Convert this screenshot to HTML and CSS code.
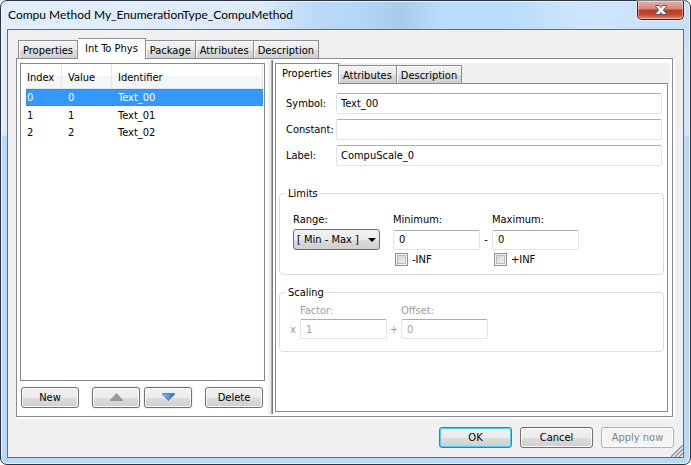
FILE: index.html
```html
<!DOCTYPE html>
<html lang="en">
<head>
<meta charset="utf-8">
<title>Compu Method My_EnumerationType_CompuMethod</title>
<link rel="stylesheet" href="styles.css">
</head>
<body>
<div class="window">
  <header class="titlebar">
    <h1>Compu Method My_EnumerationType_CompuMethod</h1>
    <button class="close" type="button" aria-label="Close">
      <svg width="12" height="10" viewBox="0 0 12 10"><path d="M.8.5h3.500L6 2.500 7.700.5h3.500v1.300L8.300 5l2.900 3.200v1.300H7.700L6 7.500 4.300 9.500H.8V8.200L3.700 5 .8 1.800z" fill="#fff" stroke="#535666" stroke-width="1"/></svg>
    </button>
  </header>
  <main class="client">
    <nav class="tabs" role="tablist">
      <button class="tab" type="button" role="tab">Properties</button>
      <button class="tab active" type="button" role="tab" aria-selected="true">Int To Phys</button>
      <button class="tab" type="button" role="tab">Package</button>
      <button class="tab" type="button" role="tab">Attributes</button>
      <button class="tab" type="button" role="tab">Description</button>
    </nav>
    <section class="panel outer">
      <div class="left">
        <div class="list">
          <table>
            <thead><tr><th class="c-index">Index</th><th class="c-value">Value</th><th>Identifier</th></tr></thead>
            <tbody>
              <tr class="selected"><td>0</td><td>0</td><td>Text_00</td></tr>
              <tr><td>1</td><td>1</td><td>Text_01</td></tr>
              <tr><td>2</td><td>2</td><td>Text_02</td></tr>
            </tbody>
          </table>
        </div>
        <div class="list-actions">
          <button class="btn" type="button">New</button>
          <div class="movers">
            <button class="btn" type="button" aria-label="Move up"><svg width="13" height="8" viewBox="0 0 13 8"><path d="M6.500 0 13 7v1H0V7z" fill="#989898"/></svg></button>
            <button class="btn" type="button" aria-label="Move down"><svg width="13" height="8" viewBox="0 0 13 8"><defs><linearGradient id="blue" x1="0" x2="1"><stop offset="0" stop-color="#8fc0f5"/><stop offset="1" stop-color="#2864c8"/></linearGradient></defs><path d="M.5.5h12v.7L6.500 7.500.5 1.200z" fill="url(#blue)" stroke="#3a70cc" stroke-width=".8"/></svg></button>
          </div>
          <button class="btn" type="button">Delete</button>
        </div>
      </div>
      <div class="splitter"></div>
      <div class="right">
        <nav class="tabs inner" role="tablist">
          <button class="tab active" type="button" role="tab" aria-selected="true">Properties</button>
          <button class="tab" type="button" role="tab">Attributes</button>
          <button class="tab" type="button" role="tab">Description</button>
        </nav>
        <form class="panel details">
          <div class="fields">
            <label for="symbol">Symbol:</label><input id="symbol" type="text" value="Text_00">
            <label for="constant">Constant:</label><input id="constant" type="text">
            <label for="label">Label:</label><input id="label" type="text" value="CompuScale_0">
          </div>
          <fieldset>
            <legend>Limits</legend>
            <div class="limits">
              <label for="range">Range:</label>
              <label for="min">Minimum:</label>
              <span></span>
              <label for="max">Maximum:</label>
              <span class="select"><select id="range"><option>[ Min - Max ]</option></select></span>
              <input id="min" type="text" value="0">
              <span class="op">-</span>
              <input id="max" type="text" value="0">
              <span></span>
              <label class="check"><input type="checkbox">-INF</label>
              <span></span>
              <label class="check"><input type="checkbox">+INF</label>
            </div>
          </fieldset>
          <fieldset class="scaling-set" disabled>
            <legend>Scaling</legend>
            <div class="scaling">
              <span></span><label for="factor">Factor:</label><span></span><label for="offset">Offset:</label>
              <span class="op">x</span><input id="factor" type="text" value="1">
              <span class="op">+</span><input id="offset" type="text" value="0">
            </div>
          </fieldset>
        </form>
      </div>
    </section>
    <footer class="footer">
      <button class="btn default" type="button">OK</button>
      <button class="btn" type="button">Cancel</button>
      <button class="btn" type="button" disabled>Apply now</button>
    </footer>
    <svg class="grip" width="12" height="12" viewBox="0 0 12 12"><path d="M0 12 12 0M4 12l8-8M8 12l4-4" stroke="#8c8c8c" stroke-width="1.300"/></svg>
  </main>
</div>
</body>
</html>
```
FILE: styles.css
```css
* { box-sizing: border-box; }
body {
  margin: 0;
  background: #fff;
  color: #000;
  font: 11px/13px "DejaVu Sans Condensed", "DejaVu Sans", sans-serif;
}
button, input, select { font: inherit; color: inherit; margin: 0; }
button { padding: 0; }

.window {
  display: flex;
  flex-direction: column;
  min-height: 100vh;
  padding: 0 6px 6px;
  border: 1px solid #2c3340;
  border-radius: 7px;
  box-shadow: inset 0 0 0 1px #e8f4ff;
  background:
    linear-gradient(#0000 134px, #b9d9f9 135px),
    linear-gradient(#0000 30px, #dcebfb99 80px),
    linear-gradient(90deg, #e3effb 0, #dceafa 38%, #bad9f7 46%, #b4d6f6 53%, #a9cbe9 58%, #bbdcfb 64%, #bbdcfb 74%, #d0e5fc 85%, #c6e0f8 100%);
}
.titlebar {
  display: flex;
  justify-content: space-between;
  align-items: flex-start;
  height: 28px;
}
h1 {
  margin: 0;
  padding: 5px 0 0 1px;
  font: 12px/18px Lato, "Open Sans", sans-serif;
}
.close {
  width: 47px;
  height: 19px;
  border: 1px solid #4a1c1c;
  border-top: 0;
  border-radius: 0 0 5px 5px;
  background: linear-gradient(#eab0a8, #d98078 45%, #b83a24 50%, #c8452f 75%, #dc8a70);
  box-shadow: inset 0 0 0 1px #ffffff66, 0 0 0 1px #ffffff66;
  line-height: 0;
}

.client {
  position: relative;
  flex: 1;
  display: flex;
  flex-direction: column;
  padding: 8px 9px 9px 8px;
  border: 1px solid #5d6d79;
  background: #f0f0f0;
}
.tabs { display: flex; align-items: flex-end; height: 20px; padding-left: 2px; }
.tabs.inner { padding-left: 0; background: #f0f0f0; margin-right: -2px; }
.tab {
  flex: 0 0 auto;
  height: 18px;
  padding: 1px 4px 0;
  border: 1px solid #898c95;
  border-left-width: 0;
  border-bottom: 0;
  background: linear-gradient(#f2f2f2, #ebebeb 50%, #dddddd 51%, #cfcfcf);
  box-shadow: inset 1px 1px #fcfcfc;
}
.tab:first-child { border-left-width: 1px; }
.tab.active {
  z-index: 1;
  height: 21px;
  margin-bottom: -1px;
  padding: 0 7px 2px;
  background: #fff;
  box-shadow: none;
}
.inner .tab.active { padding: 0 6px 2px; }
.panel { border: 1px solid #898c95; background: #fff; }
.outer {
  flex: 1;
  display: flex;
  margin-right: 1px;
  padding: 1px 2px 4px 3px;
  box-shadow: 1px 1px #fff, 2px 2px #fff;
}
.left { flex: 0 0 245px; display: flex; flex-direction: column; padding-top: 3px; }
.list { flex: 1; border: 1px solid #828790; padding: 0 1px 0 5px; }
table { width: 100%; border-collapse: separate; border-spacing: 0; table-layout: fixed; }
th, td { padding: 0 2px 0 6px; text-align: left; font-weight: normal; }
th:first-child, td:first-child { padding-left: 1px; }
th {
  height: 25px;
  padding-top: 2px;
  border-right: 1px solid #e2e5ea;
  border-bottom: 1px solid #e2e5ea;
  background: linear-gradient(#fff 50%, #f5f6f8 52%);
}
td { height: 17px; padding-top: 1px; }
.c-index { width: 36px; }
.c-value { width: 50px; }
.selected { background: #39f; color: #fff; }
.selected td { padding-top: 0; border: 0 dotted #c86400; border-width: 1px 0; }
.selected td:first-child { padding-left: 0; border-left-width: 1px; }
.selected td:last-child { border-right-width: 1px; }

.list-actions { display: flex; justify-content: space-between; padding: 6px 2px 4px 1px; }
.movers { display: flex; gap: 4px; }
.btn {
  width: 58px;
  height: 21px;
  border: 1px solid #707070;
  border-radius: 3px;
  background: linear-gradient(#f2f2f2, #ebebeb 50%, #dddddd 51%, #cfcfcf);
  box-shadow: inset 0 0 0 1px #fcfcfc;
}
.movers .btn { width: 48px; box-shadow: inset 0 0 0 1px #fcfcfc, 0 0 0 1px #f0f0f0; }
.splitter {
  flex: 0 0 5px;
  margin: 0 2px -2px 3px;
  border-right: 1px solid #777;
  background: #f0f0f0;
  box-shadow: inset -1px 0 #aaa;
}

.right { flex: 1; min-width: 0; display: flex; flex-direction: column; padding: 3px 2px 0 0; }
.details { flex: 1; padding: 9px 3px 0; }
.fields {
  display: grid;
  grid-template-columns: 46px 1fr;
  gap: 5px 4px;
  align-items: center;
  padding: 0 2px 0 7px;
}
label { white-space: nowrap; }
input[type="text"] {
  width: 100%;
  min-width: 0;
  height: 21px;
  padding: 0 4px;
  border: 1px solid #e2e3ea;
  border-top-color: #abadb3;
  border-radius: 2px;
  background: #fff;
}
fieldset {
  min-width: 0;
  margin: 21px 0 0;
  padding: 0 13px 8px;
  border: 1px solid #d5dfe5;
  border-radius: 4px;
}
legend { margin-left: -7px; padding: 0 2px; }
.limits, .scaling { display: grid; justify-content: start; align-items: center; }
.limits { grid-template-columns: 100px 87px 12px 87px; gap: 3px 0; padding-top: 13px; }
.limits input[type="text"], .scaling input[type="text"] { height: 20px; padding: 0 5px; }
.select { position: relative; width: 87px; }
select {
  display: block;
  appearance: none;
  width: 100%;
  height: 21px;
  padding: 0 3px;
  border: 1px solid #707070;
  border-radius: 3px;
  background: linear-gradient(#f2f2f2, #ebebeb 50%, #dddddd 51%, #cfcfcf);
}
.select::after {
  content: "";
  position: absolute;
  right: 4px;
  top: 9px;
  border: 4px solid transparent;
  border-top-color: #000;
  border-bottom: 0;
  pointer-events: none;
}
.op { text-align: center; }
.check { display: flex; align-items: center; gap: 4px; padding-left: 2px; }
.check input {
  appearance: none;
  width: 13px;
  height: 13px;
  border: 1px solid #8e8f8f;
  background: linear-gradient(135deg, #cbcfd5, #f6f6f6);
  box-shadow: inset 0 0 0 1px #f4f4f4, inset 0 0 0 2px #b8bcc2;
}
.scaling-set { margin-top: 11px; padding-bottom: 12px; }
.scaling { grid-template-columns: 14px 87px 14px 87px; gap: 2px 0; padding-top: 5px; margin-left: -7px; color: #a0a0a0; }

.footer { display: flex; justify-content: flex-end; gap: 8px; padding-top: 10px; }
.footer .btn { width: 73px; }
.btn.default { border-color: #3c7fb1; box-shadow: inset 0 0 0 1px #46d0f5; }
.btn:disabled { border-color: #adb2b5; background: #f4f4f4; color: #838383; }
.grip { position: absolute; right: 0; bottom: 0; }
```
